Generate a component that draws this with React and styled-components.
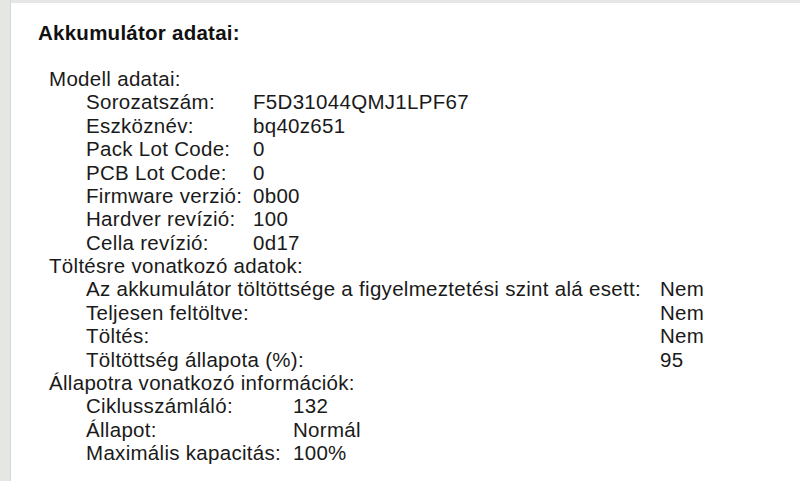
import React from "react";
import styled, { createGlobalStyle } from "styled-components";

const Global = createGlobalStyle`
  html, body { margin: 0; padding: 0; background: #ffffff; }
  body { font-family: "Liberation Sans", Arial, sans-serif; color: #1d1d1d; }
`;

const Window = styled.div`
  display: flex;
  width: 800px;
  height: 481px;
  overflow: hidden;
  background: #ffffff;
`;

const Sidebar = styled.div`
  width: 10px;
  flex: none;
  background: #e4e7e2;
  border-right: 1px solid #d6d8d4;
`;

const Main = styled.div`
  flex: 1;
  border-top: 3px solid #e6e6e6;
  padding: 17px 0 0 27px;
`;

const Title = styled.h1`
  margin: 0 0 21px 0;
  font-size: 20.5px;
  font-weight: 700;
  line-height: 26px;
  letter-spacing: 0.25px;
  color: #111;
`;

const Body = styled.div`
  padding-left: 11px;
  font-size: 20.5px;
  line-height: 23.375px;
  letter-spacing: 0.3px;
  color: #1a1a1a;
`;

const GroupTitle = styled.div``;

const Grid = styled.div`
  display: grid;
  grid-template-columns: ${(p) => p.$labelWidth}px auto;
  padding-left: 37px;
`;

const Label = styled.div`
  white-space: nowrap;
`;

const Value = styled.div`
  white-space: nowrap;
`;

const groups = [
  {
    title: "Modell adatai:",
    labelWidth: 167,
    rows: [
      ["Sorozatszám:", "F5D31044QMJ1LPF67"],
      ["Eszköznév:", "bq40z651"],
      ["Pack Lot Code:", "0"],
      ["PCB Lot Code:", "0"],
      ["Firmware verzió:", "0b00"],
      ["Hardver revízió:", "100"],
      ["Cella revízió:", "0d17"],
    ],
  },
  {
    title: "Töltésre vonatkozó adatok:",
    labelWidth: 574,
    rows: [
      ["Az akkumulátor töltöttsége a figyelmeztetési szint alá esett:", "Nem"],
      ["Teljesen feltöltve:", "Nem"],
      ["Töltés:", "Nem"],
      ["Töltöttség állapota (%):", "95"],
    ],
  },
  {
    title: "Állapotra vonatkozó információk:",
    labelWidth: 207,
    rows: [
      ["Ciklusszámláló:", "132"],
      ["Állapot:", "Normál"],
      ["Maximális kapacitás:", "100%"],
    ],
  },
];

export default function App() {
  return (
    <>
      <Global />
      <Window>
        <Sidebar />
        <Main>
          <Title>Akkumulátor adatai:</Title>
          <Body>
            {groups.map((g) => (
              <React.Fragment key={g.title}>
                <GroupTitle>{g.title}</GroupTitle>
                <Grid $labelWidth={g.labelWidth}>
                  {g.rows.map(([l, v]) => (
                    <React.Fragment key={l}>
                      <Label>{l}</Label>
                      <Value>{v}</Value>
                    </React.Fragment>
                  ))}
                </Grid>
              </React.Fragment>
            ))}
          </Body>
        </Main>
      </Window>
    </>
  );
}
